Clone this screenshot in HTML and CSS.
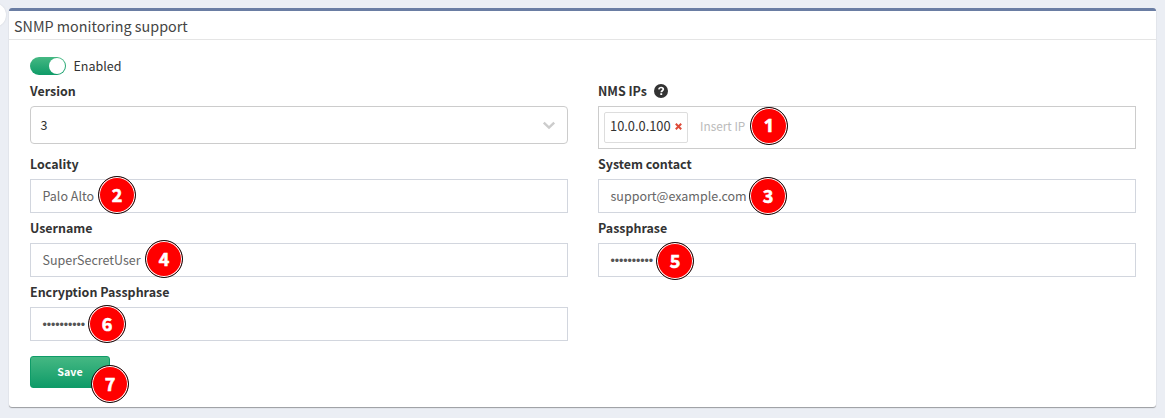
FILE: index.html
```
<!DOCTYPE html>
<html lang="en">
<head>
<meta charset="utf-8">
<title>SNMP monitoring support</title>
<link rel="stylesheet" href="styles.css">
</head>
<body>
<span class="edge-handle"></span>
<section class="card">
  <h1 class="card-title">SNMP monitoring support</h1>
  <form class="card-body">
    <div class="toggle-row"><span class="toggle"><span class="knob"></span></span><span class="toggle-text">Enabled</span></div>
    <div class="grid">
      <div class="field">
        <div class="label">Version</div>
        <div class="control select"><span>3</span>
          <svg class="chevron" width="14" height="9" viewBox="0 0 14 9"><path d="M1.800 1.600 7 6.600l5.200-5" fill="none" stroke="#ccc" stroke-width="2.400"/></svg>
        </div>
      </div>
      <div class="field">
        <div class="label">NMS IPs
          <svg class="help" width="14" height="14" viewBox="0 0 14 14"><circle cx="7" cy="7" r="7" fill="#333"/><path d="M4.800 5.300C5 4.100 5.900 3.500 7 3.500c1.300 0 2.300.7 2.300 1.800 0 1.400-2 1.400-2 2.900" fill="none" stroke="#fff" stroke-width="1.700"/><path d="M6.300 9.200h1.900V11H6.300z" fill="#fff"/></svg>
        </div>
        <div class="control tags"><span class="tag">10.0.0.100<svg class="remove" width="7" height="7" viewBox="0 0 7 7"><path d="M.8.8l5.400 5.400M6.200.8.8 6.200" stroke="#dd4b39" stroke-width="2"/></svg></span><span class="placeholder">Insert IP</span><b class="badge b1">1</b></div>
      </div>
      <div class="field">
        <div class="label">Locality</div>
        <div class="control input">Palo Alto<b class="badge b2">2</b></div>
      </div>
      <div class="field">
        <div class="label">System contact</div>
        <div class="control input">support@example.com<b class="badge b3">3</b></div>
      </div>
      <div class="field">
        <div class="label">Username</div>
        <div class="control input">SuperSecretUser<b class="badge b4">4</b></div>
      </div>
      <div class="field">
        <div class="label">Passphrase</div>
        <div class="control input"><span class="dots">••••••••••</span><b class="badge b5">5</b></div>
      </div>
      <div class="field">
        <div class="label">Encryption Passphrase</div>
        <div class="control input"><span class="dots">••••••••••</span><b class="badge b6">6</b></div>
      </div>
    </div>
    <div class="save">Save<b class="badge b7">7</b></div>
  </form>
</section>
</body>
</html>
```
FILE: styles.css
```
* { box-sizing: border-box; }
body {
  margin: 0;
  height: 418px;
  padding: 8px 9px 0;
  overflow: hidden;
  background: #ebeef4;
  color: #333;
  font: 12.5px/20px "Noto Sans CJK SC", "Noto Sans", sans-serif;
}
.edge-handle {
  position: absolute;
  left: -18px;
  top: 3px;
  width: 24px;
  height: 24px;
  border-radius: 50%;
  background: #fff;
  box-shadow: 0 0 2px rgba(0, 0, 0, .12);
}
.card {
  height: 399px;
  background: #fff;
  border-top: 3px solid #6a7da3;
  border-radius: 3px;
  box-shadow: 0 1px 1px rgba(0, 0, 0, .35);
}
.card-title {
  margin: 0;
  height: 29px;
  padding: 0 5px;
  border-bottom: 1px solid #e5e5e5;
  font-size: 14.33px;
  font-weight: 400;
  line-height: 30px;
  color: #444;
}
.card-body { padding: 17px 20px 0 21px; }
.toggle-row { display: flex; align-items: center; height: 18px; gap: 7.5px; }
.toggle {
  width: 36px;
  height: 18px;
  padding: 1px;
  display: flex;
  justify-content: flex-end;
  border-radius: 9px;
  background: linear-gradient(#45b883, #0f9b68);
}
.knob { width: 16px; height: 16px; border-radius: 50%; background: #fff; }
.grid {
  margin-top: 6px;
  display: grid;
  grid-template-columns: 538px 538px;
  column-gap: 30px;
  row-gap: 5px;
}
.field { display: flex; flex-direction: column; gap: 5px; }
.label { height: 20px; display: flex; align-items: center; gap: 7px; font-size: 12.45px; font-weight: 700; white-space: nowrap; }
.control {
  position: relative;
  display: flex;
  align-items: center;
  border: 1px solid #d2d6de;
}
.select {
  height: 38px;
  padding: 0 11px 0 9.5px;
  justify-content: space-between;
  border-color: #ccc;
  border-radius: 4px;
}
.input { height: 34px; padding-left: 11.5px; color: #666; }
.tags { height: 43px; padding-left: 5px; gap: 12px; border-color: #ccc; }
.tag {
  height: 31px;
  width: 84px;
  padding: 0 0 3px 5px;
  display: flex;
  align-items: center;
  gap: 4px;
  border: 1px solid #ddd;
  border-radius: 2px;
  font-size: 12.85px;
}
.remove { margin-top: 1px; }
.placeholder { padding-bottom: 3px; color: #bbb; font-size: 11.8px; }
.dots {
  padding-top: 2px;
  font: 12.4px/20px "Liberation Sans", sans-serif;
  letter-spacing: -.09px;
  color: #555;
}
.save {
  position: relative;
  width: 80px;
  height: 32px;
  margin-top: 15px;
  border: 1px solid #0f9b68;
  border-radius: 3px;
  background: linear-gradient(#45b883, #0f9b68);
  color: #fff;
  font-size: 10.7px;
  font-weight: 700;
  line-height: 29px;
  text-align: center;
}
.badge {
  position: absolute;
  width: 38px;
  height: 38px;
  border: 1px solid #111;
  border-radius: 50%;
  background: #f00;
  box-shadow: inset 0 0 0 1px #fff;
  color: #fff;
  font: 700 18px/35px "Noto Sans CJK SC", "Noto Sans", sans-serif;
  -webkit-text-stroke: .6px #fff;
  text-align: center;
}
.b1 { left: 151px; top: 0; font-family: "Open Sans", sans-serif; }
.b2 { left: 67px; top: -4px; }
.b3 { left: 150px; top: -3px; }
.b4 { left: 114px; top: -4px; }
.b5 { left: 57px; top: -2px; }
.b6 { left: 57px; top: -3px; }
.b7 { left: 60px; top: 8px; }
```
